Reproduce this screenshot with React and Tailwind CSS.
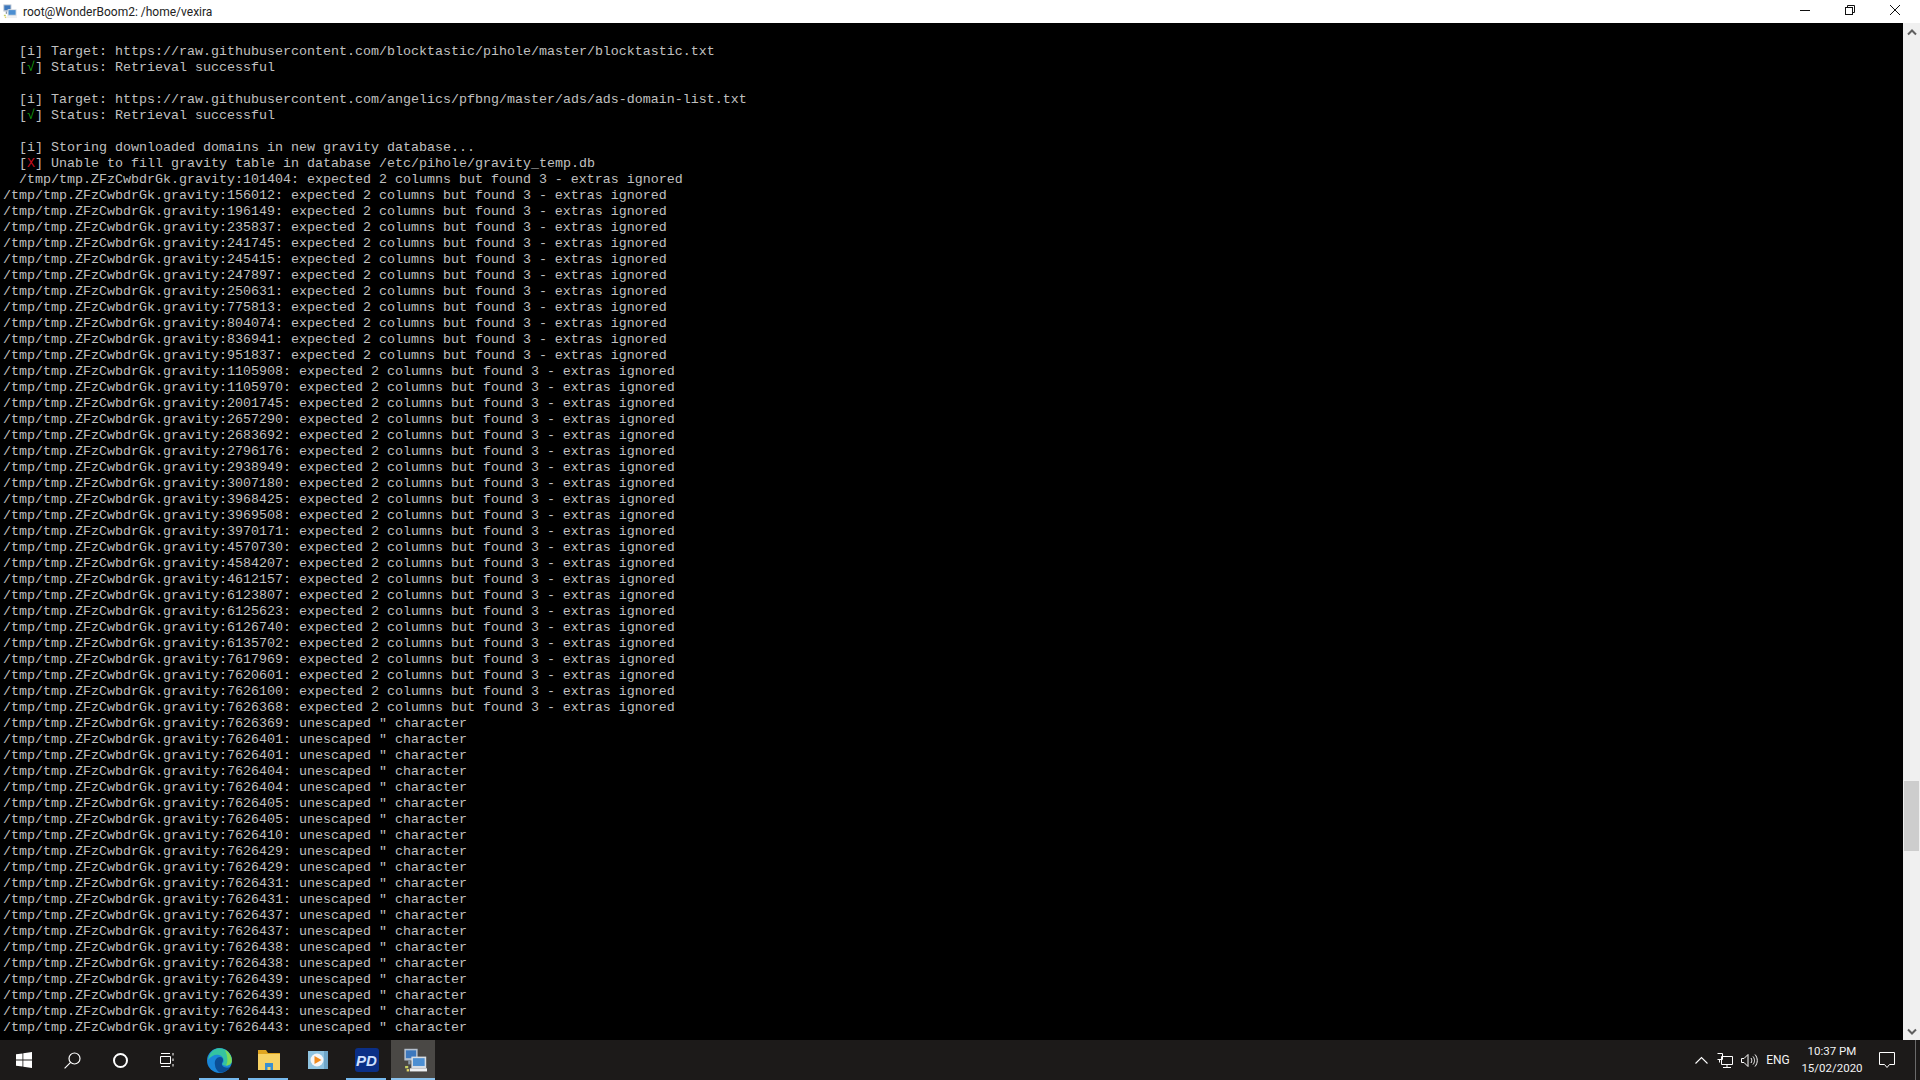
import React from 'react';

const prefix = '/tmp/tmp.ZFzCwbdrGk.gravity:';
const columnsNote = ': expected 2 columns but found 3 - extras ignored';
const quoteNote = ': unescaped " character';

const columnLines = [
  156012, 196149, 235837, 241745, 245415, 247897, 250631, 775813, 804074, 836941, 951837,
  1105908, 1105970, 2001745, 2657290, 2683692, 2796176, 2938949, 3007180, 3968425, 3969508,
  3970171, 4570730, 4584207, 4612157, 6123807, 6125623, 6126740, 6135702, 7617969, 7620601,
  7626100, 7626368,
];

const quoteLines = [
  7626369, 7626401, 7626401, 7626404, 7626404, 7626405, 7626405, 7626410, 7626429, 7626429,
  7626431, 7626431, 7626437, 7626437, 7626438, 7626438, 7626439, 7626439, 7626443, 7626443,
];

const Line = ({ children }) => (
  <div className="h-4 whitespace-pre">{children}</div>
);

const Mark = ({ color, children }) => (
  <>
    {'  ['}
    <span className={color}>{children}</span>
    {'] '}
  </>
);

// two overlapping monitors, back one up and to the left
const PuttyIcon = ({ className }) => (
  <svg className={className} viewBox="0 0 32 32">
    <rect x="3" y="1" width="17" height="15" fill="#b4c0cf" />
    <rect x="5" y="3" width="13" height="10" fill="#3d78bd" />
    <rect x="8" y="16" width="3" height="5" fill="#8c9aa8" />
    <rect x="12" y="11" width="19" height="15" fill="#d7dde4" />
    <rect x="14" y="13" width="15" height="10" fill="#4c8fd2" />
    <rect x="10" y="26" width="22" height="4" fill="#eef0f2" />
    <rect x="4" y="23" width="4" height="3" fill="#c6cf62" />
    <rect x="6" y="27" width="3" height="3" fill="#e3d76a" />
  </svg>
);

const TaskButton = ({ active, underline, children }) => (
  <div className="relative flex h-10 w-[49px] items-center justify-center">
    {active && <div className="absolute top-0 bottom-0 left-0 w-[44px] bg-[#4a4845]" />}
    <div className="relative flex items-center justify-center">{children}</div>
    {underline && (
      <div className={active ? 'absolute bottom-0 left-0 h-[2px] w-[44px] bg-[#8cc3ee]' : 'absolute bottom-0 left-[4px] h-[2px] w-10 bg-[#76b9ed]'} />
    )}
  </div>
);

const App = () => {
  return (
    <div className="flex h-[1080px] w-[1920px] flex-col overflow-hidden bg-black">
      {/* Title bar */}
      <div className="flex h-[23px] shrink-0 items-center bg-white font-['Roboto',sans-serif] text-black">
        <PuttyIcon className="ml-[2px] h-[15px] w-[15px]" />
        <span className="ml-[6px] text-[12px] text-[#222]">root@WonderBoom2: /home/vexira</span>
        <div className="mr-5 mb-[3px] ml-auto flex items-center gap-[35px]">
          <svg className="h-[10px] w-[10px]" viewBox="0 0 10 10">
            <path d="M0 5.5h10" stroke="#111" />
          </svg>
          <svg className="h-[10px] w-[10px]" viewBox="0 0 10 10" fill="none" stroke="#111">
            <rect x="0.5" y="2.5" width="7" height="7" />
            <path d="M2.5 2.5v-2h7v7h-2" />
          </svg>
          <svg className="h-[10px] w-[10px]" viewBox="0 0 10 10" stroke="#111">
            <path d="M0 0l10 10M10 0L0 10" />
          </svg>
        </div>
      </div>

      {/* Terminal */}
      <div className="flex min-h-0 flex-1">
        <div className="flex-1 overflow-hidden bg-black pt-[21px] pl-[3px] font-['Liberation_Mono',monospace] text-[13.33px] leading-4 text-[#c0c0c0]">
          <Line><Mark>i</Mark>Target: https://raw.githubusercontent.com/blocktastic/pihole/master/blocktastic.txt</Line>
          <Line><Mark color="text-[#13a10e]">√</Mark>Status: Retrieval successful</Line>
          <Line> </Line>
          <Line><Mark>i</Mark>Target: https://raw.githubusercontent.com/angelics/pfbng/master/ads/ads-domain-list.txt</Line>
          <Line><Mark color="text-[#13a10e]">√</Mark>Status: Retrieval successful</Line>
          <Line> </Line>
          <Line><Mark>i</Mark>Storing downloaded domains in new gravity database...</Line>
          <Line><Mark color="text-[#c50f1f]">X</Mark>Unable to fill gravity table in database /etc/pihole/gravity_temp.db</Line>
          <Line>{'  ' + prefix + '101404' + columnsNote}</Line>
          {columnLines.map((n) => (
            <Line key={n}>{prefix + n + columnsNote}</Line>
          ))}
          {quoteLines.map((n, i) => (
            <Line key={i}>{prefix + n + quoteNote}</Line>
          ))}
        </div>

        {/* Scrollbar */}
        <div className="relative flex w-[17px] shrink-0 flex-col justify-between bg-[#f0f0f0] pt-[5px] pb-[4px]">
          <svg className="mx-auto h-[8px] w-[10px]" viewBox="0 0 10 8" fill="none" stroke="#606060" strokeWidth="2">
            <path d="M1 6.5l4-4 4 4" />
          </svg>
          <div className="absolute top-[758px] left-[1px] h-[70px] w-[15px] bg-[#cdcdcd]" />
          <svg className="mx-auto h-[8px] w-[10px]" viewBox="0 0 10 8" fill="none" stroke="#606060" strokeWidth="2">
            <path d="M1 1.5l4 4 4-4" />
          </svg>
        </div>
      </div>

      {/* Taskbar */}
      <div className="flex h-10 shrink-0 items-center bg-[#1c1a19] font-['Roboto',sans-serif] text-[#f2f2f2]">
        <div className="flex h-10 w-12 items-center justify-center">
          <svg className="h-4 w-4" viewBox="0 0 16 16" fill="#fff">
            <path d="M0 2.3l6.5-.9v6.2H0zM7.3 1.3L16 0v7.6H7.3zM0 8.4h6.5v6.2L0 13.7zM7.3 8.4H16V16l-8.7-1.3z" />
          </svg>
        </div>
        <div className="flex h-10 w-12 items-center justify-center">
          <svg className="h-[17px] w-[17px]" viewBox="0 0 17 17" fill="none" stroke="#fff" strokeWidth="1.2">
            <circle cx="10.5" cy="6.5" r="5.5" />
            <path d="M6.6 10.4L.6 16.4" />
          </svg>
        </div>
        <div className="flex h-10 w-12 items-center justify-center">
          <div className="h-[15px] w-[15px] rounded-full border-2 border-white" />
        </div>
        <div className="mr-[3px] flex h-10 w-12 items-center justify-center">
          <svg className="h-4 w-4" viewBox="0 0 16 16" fill="none" stroke="#fff">
            <path d="M.5 4.5h10v7H.5zM1 1.5h9M1 14.5h9M13 1v2.5M13 6.5v2.5M13 12v2.5" />
          </svg>
        </div>

        <TaskButton underline>
          <svg className="h-[25px] w-[25px]" viewBox="0 0 25 25">
            <circle cx="12.5" cy="12.5" r="12.5" fill="#1a86d8" />
            <path d="M10 .5C18-1 25 5 24.800 13c-.3 5-7.800 6-9.800 3 3-2 2-8-3-9C8 6 4 8 1 12 2 6 5 2 10 .5z" fill="#35c3a0" />
            <path d="M18 2c4 2 6.800 6 6.800 11-.2 3-3 4.500-5.800 4.500 2-3 2-9-1-15.500z" fill="#7ed957" />
            <path d="M8 17c-1-5 2-8 5-8 3 0 4 3 2 6-1 3 3 6 8.500 4-2.500 3.500-6.500 6-11 5.500C10 23 8 20 8 17z" fill="#0b4f96" />
          </svg>
        </TaskButton>
        <TaskButton underline>
          <svg className="h-[22px] w-[22px]" viewBox="0 0 22 22">
            <path d="M0 1h8l2 3h12v3H0z" fill="#e0a520" />
            <path d="M0 5h22v16H0z" fill="#f7d264" />
            <path d="M7 14h8v7h-2.500v-3h-3v3H7z" fill="#3a8fd0" />
          </svg>
        </TaskButton>
        <TaskButton>
          <svg className="h-[20px] w-[20px]" viewBox="0 0 20 20">
            <rect x="0" y="1" width="20" height="18" fill="#8fc3e0" />
            <rect x="16" y="1" width="4" height="18" fill="#6fa6c8" />
            <circle cx="9" cy="10" r="6.500" fill="#f5f5f5" />
            <path d="M6.500 6l7 4-7 4z" fill="#f08a1d" />
          </svg>
        </TaskButton>
        <TaskButton underline>
          <div className="flex h-6 w-6 items-center justify-center rounded-[3px] bg-[#0b2f86] font-['Liberation_Sans',sans-serif] text-[15px] font-bold italic leading-none text-[#cfe0ff]">
            PD
          </div>
        </TaskButton>
        <TaskButton active underline>
          <PuttyIcon className="mr-[3px] h-[25px] w-[25px]" />
        </TaskButton>

        {/* Tray */}
        <div className="ml-auto flex h-10 items-center">
          <div className="flex w-6 justify-center">
            <svg className="h-[8px] w-[13px]" viewBox="0 0 13 8" fill="none" stroke="#fff" strokeWidth="1.1">
              <path d="M.5 7.5l6-6 6 6" />
            </svg>
          </div>
          <div className="flex w-6 justify-center">
            <svg className="h-[15px] w-[16px]" viewBox="0 0 16 15" fill="none" stroke="#fff">
              <path d="M4.500 3.500h11v8h-11zM10 11.500v3M6 14.500h8M.5.500h5v6h-5M2.500 6.500v3" />
            </svg>
          </div>
          <div className="flex w-6 justify-center">
            <svg className="h-[15px] w-[17px]" viewBox="0 0 17 15" fill="none" stroke="#fff">
              <path d="M.5 5.500h2.500l4-4v12l-4-4H.5zM10 5c1 1.500 1 3.500 0 5M12 3.500c2 2.500 2 5.500 0 8M14 1.500c3 3.500 3 8.500 0 12" />
            </svg>
          </div>
          <span className="w-[34px] text-center text-[12px]">ENG</span>
          <div className="flex w-[74px] flex-col items-center text-[11.5px] leading-[17px]">
            <span>10:37 PM</span>
            <span>15/02/2020</span>
          </div>
          <div className="flex w-9 justify-center">
            <svg className="h-[17px] w-[16px]" viewBox="0 0 16 17" fill="none" stroke="#fff">
              <path d="M.5.500h15v12h-5l-2.500 3-2.500-3h-5z" />
            </svg>
          </div>
          <div className="ml-[10px] h-10 w-[1px] bg-[#6a6a6a]" />
          <div className="h-10 w-[4px]" />
        </div>
      </div>
    </div>
  );
};

export default App;
